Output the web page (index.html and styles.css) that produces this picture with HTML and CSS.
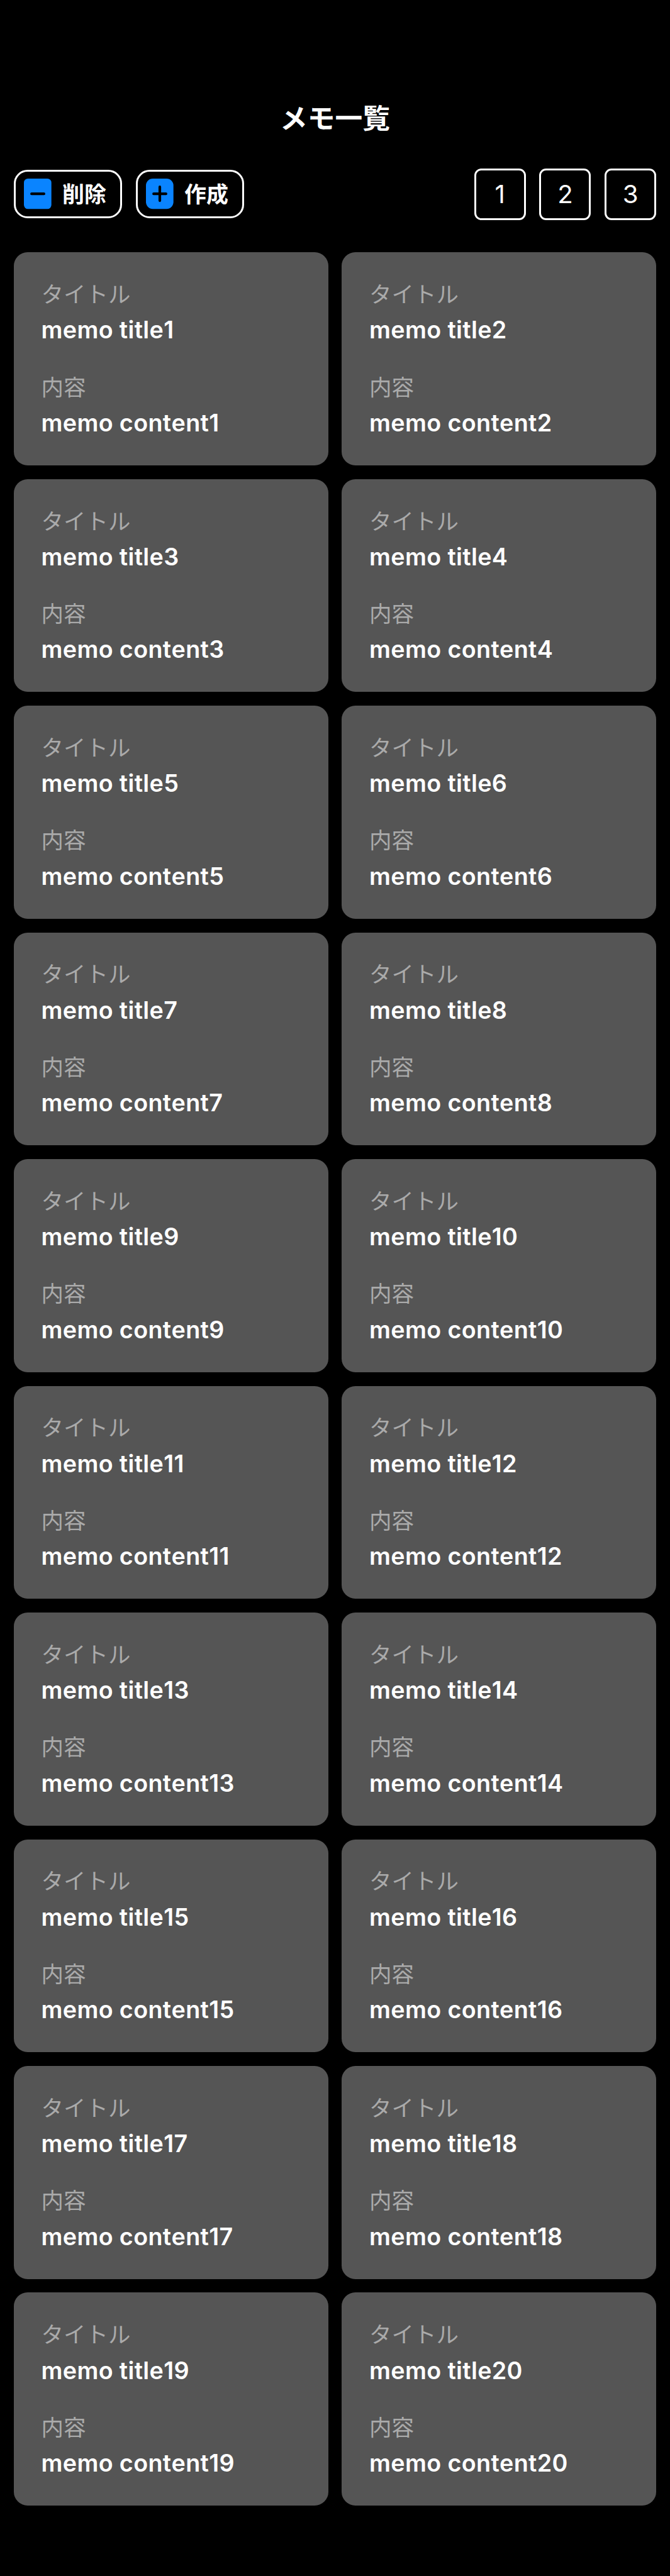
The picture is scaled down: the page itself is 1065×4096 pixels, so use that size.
FILE: index.html
```html
<!DOCTYPE html>
<html lang="ja">
<head>
<meta charset="utf-8">
<title>メモ一覧</title>
<link rel="stylesheet" href="styles.css">
</head>
<body>
<header class="navbar"><h1 class="navbar-title">メモ一覧</h1></header>
<div class="toolbar">
  <div class="actions">
    <button class="action" type="button">
      <svg class="action-icon" viewBox="0 0 48 53"><rect class="tile" width="48" height="53" rx="7"/><path class="mark" d="M13.4 26.5H35"/></svg>
      <span class="action-text">削除</span>
    </button>
    <button class="action" type="button">
      <svg class="action-icon" viewBox="0 0 48 53"><rect class="tile" width="48" height="53" rx="12"/><path class="mark" d="M13.4 26.5H35M24.2 14.5V38.5"/></svg>
      <span class="action-text">作成</span>
    </button>
  </div>
  <div class="columns">
    <button class="column" type="button">1</button>
    <button class="column" type="button">2</button>
    <button class="column" type="button">3</button>
  </div>
</div>
<main class="memos" id="memos"></main>
<script src="memos.js"></script>
</body>
</html>
```
FILE: memos.js
```js
const list = document.getElementById('memos');

function field(label, value) {
  const group = document.createElement('div');
  group.className = 'field';
  const name = document.createElement('div');
  name.className = 'label';
  name.textContent = label;
  const text = document.createElement('div');
  text.className = 'value';
  text.textContent = value;
  group.append(name, text);
  return group;
}

for (let n = 1; n <= 20; n++) {
  const card = document.createElement('article');
  card.className = 'card';
  card.append(field('タイトル', 'memo title' + n), field('内容', 'memo content' + n));
  list.append(card);
}
```
FILE: styles.css
```css
/* 1rem = 10pt on a 390pt wide screen */
html {
  font-size: 27.30769px;
  background: #000;
}

* {
  box-sizing: border-box;
}

body {
  margin: 0;
  width: 39rem;
  height: 4096px;
  overflow: hidden;
  background: #000;
  color: #fff;
  font-family: Inter, "Noto Sans CJK JP", sans-serif;
  font-optical-sizing: none;
}

.navbar {
  height: 9.1rem;
  padding-top: 4.74rem;
}

.navbar-title {
  margin: 0;
  font-size: 1.6rem;
  font-weight: 700;
  line-height: 4.4rem;
  text-align: center;
}

.toolbar {
  display: flex;
  justify-content: space-between;
  align-items: center;
  height: 3rem;
  margin: 0.7rem 0.8rem 1.9rem;
}

.actions,
.columns {
  display: flex;
  gap: 0.8rem;
}

.action,
.column {
  background: none;
  border: 3px solid #fff;
  color: #fff;
  font-family: inherit;
}

.action {
  display: flex;
  align-items: center;
  gap: 0.63rem;
  width: 6.3rem;
  height: 2.8rem;
  padding: 0 0 0 0.49rem;
  border-radius: 0.8rem;
}

.action-icon {
  flex: none;
  width: 1.6rem;
  height: 1.767rem;
}

.tile {
  fill: #0a84ff;
}

.mark {
  fill: none;
  stroke: #000;
  stroke-width: 4.6;
  stroke-linecap: round;
}

.action-text {
  padding-top: 0.08rem;
  font-size: 1.28rem;
  font-weight: 700;
  line-height: 1.8rem;
  white-space: nowrap;
}

.column {
  width: 3rem;
  height: 3rem;
  padding: 0;
  border-radius: 0.4rem;
  font-size: 1.47rem;
  line-height: 2.8rem;
  text-align: center;
}

.memos {
  display: grid;
  grid-template-columns: 1fr 1fr;
  gap: 0.8rem;
  padding: 0 0.8rem;
}

.card {
  display: flex;
  flex-direction: column;
  gap: 1.6rem;
  height: 12.4rem;
  padding: 1.6rem;
  border-radius: 0.8rem;
  background: #555;
}

.field {
  display: flex;
  flex-direction: column;
  gap: 0.4rem;
}

.label,
.value {
  height: 1.7rem;
  line-height: 1.7rem;
  white-space: nowrap;
}

.label {
  color: #aaa;
  font-size: 1.3rem;
  font-weight: 400;
  line-height: 1.76rem;
}

.value {
  font-size: 1.38rem;
  font-weight: 560;
  font-kerning: none;
  letter-spacing: 0.013rem;
  line-height: 1.68rem;
}
```
